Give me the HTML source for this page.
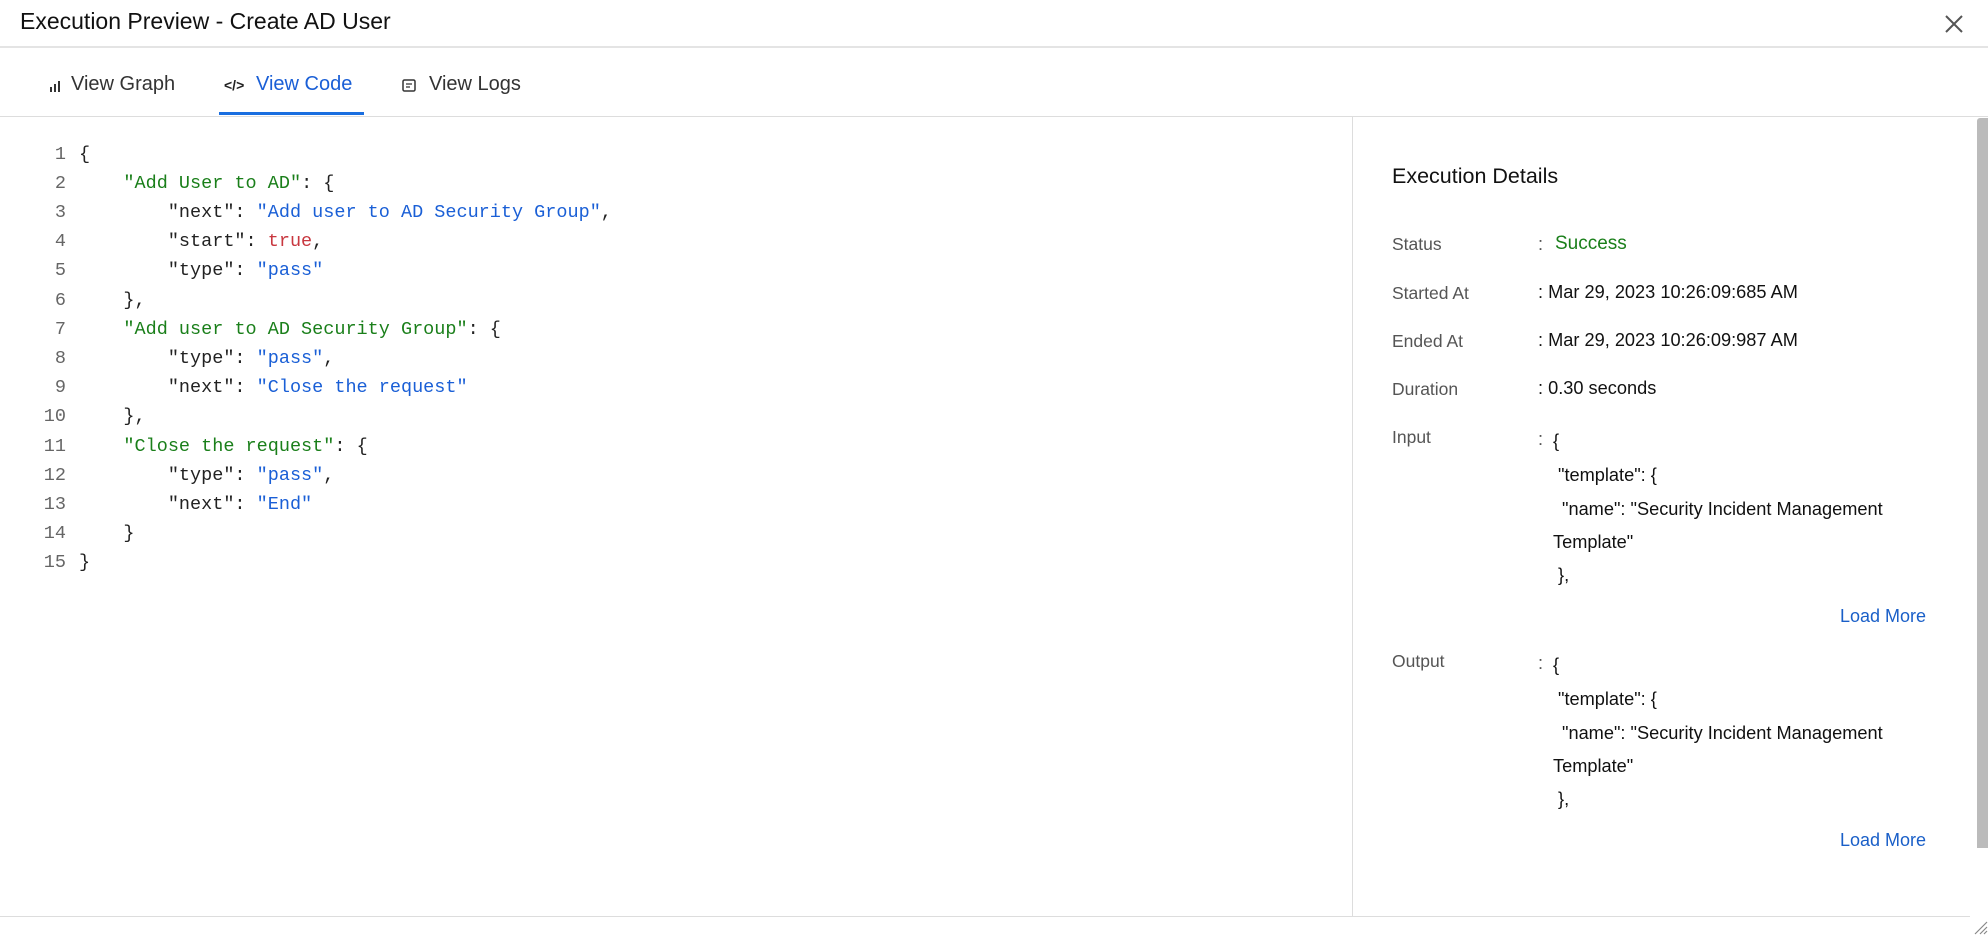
<!DOCTYPE html>
<html><head><meta charset="utf-8"><style>
*{margin:0;padding:0;box-sizing:border-box}
body{width:1988px;height:935px;background:#fff;position:relative;overflow:hidden;font-family:"Liberation Sans",sans-serif;color:#222}
.a{position:absolute;white-space:nowrap}
.code{position:absolute;left:0;top:3px;font-family:"Liberation Mono",monospace;font-size:18.5px;color:#222}
.ln{position:absolute;width:40px;text-align:right;color:#666;left:26px}
.cl{position:absolute;left:79px;white-space:pre}
.g{color:#1a7f1a}.b{color:#1a5fd6}.r{color:#c8373f}
.lbl{color:#555;font-size:17.5px}
.val{font-size:18.2px;color:#111}
.lm{color:#1a5fc8;font-size:18px}
.rp{position:absolute;left:0;top:3px;width:1988px;height:930px}
</style></head><body>
<div class="a" style="left:20px;top:8px;font-size:23px;color:#111">Execution Preview - Create AD User</div>
<svg class="a" style="left:1944px;top:14px" width="20" height="20" viewBox="0 0 20 20"><path d="M2 2L18 18M18 2L2 18" stroke="#555" stroke-width="2"/></svg>
<div class="a" style="left:0;top:46px;width:1988px;height:2px;background:#e4e4e4"></div>

<svg class="a" style="left:49px;top:80px" width="12" height="12" viewBox="0 0 12 12"><rect x="1" y="7" width="2" height="5" fill="#333"/><rect x="5" y="4" width="2" height="8" fill="#333"/><rect x="9" y="1" width="2" height="11" fill="#333"/></svg>
<div class="a" style="left:71px;top:73px;font-size:20px;color:#333">View Graph</div>
<div class="a" style="left:224px;top:77px;font-size:14px;color:#222;font-weight:bold">&lt;/&gt;</div>
<div class="a" style="left:256px;top:73px;font-size:20px;color:#1a5fd6">View Code</div>
<div class="a" style="left:219px;top:112px;width:145px;height:3px;background:#1a6ee0"></div>
<svg class="a" style="left:402px;top:79px" width="14" height="13" viewBox="0 0 14 13"><rect x="1" y="1" width="12" height="11" rx="1.5" fill="none" stroke="#333" stroke-width="1.5"/><path d="M4 5H10M4 8H8" stroke="#333" stroke-width="1.3"/></svg>
<div class="a" style="left:429px;top:73px;font-size:20px;color:#333">View Logs</div>
<div class="a" style="left:0;top:116px;width:1988px;height:1px;background:#ddd"></div>

<div class="code">
<div class="ln" style="top:141px">1</div><div class="cl" style="top:141px">{</div>
<div class="ln" style="top:170px">2</div><div class="cl" style="top:170px">    <span class="g">"Add User to AD"</span>: {</div>
<div class="ln" style="top:199px">3</div><div class="cl" style="top:199px">        "next": <span class="b">"Add user to AD Security Group"</span>,</div>
<div class="ln" style="top:228px">4</div><div class="cl" style="top:228px">        "start": <span class="r">true</span>,</div>
<div class="ln" style="top:257px">5</div><div class="cl" style="top:257px">        "type": <span class="b">"pass"</span></div>
<div class="ln" style="top:287px">6</div><div class="cl" style="top:287px">    },</div>
<div class="ln" style="top:316px">7</div><div class="cl" style="top:316px">    <span class="g">"Add user to AD Security Group"</span>: {</div>
<div class="ln" style="top:345px">8</div><div class="cl" style="top:345px">        "type": <span class="b">"pass"</span>,</div>
<div class="ln" style="top:374px">9</div><div class="cl" style="top:374px">        "next": <span class="b">"Close the request"</span></div>
<div class="ln" style="top:403px">10</div><div class="cl" style="top:403px">    },</div>
<div class="ln" style="top:433px">11</div><div class="cl" style="top:433px">    <span class="g">"Close the request"</span>: {</div>
<div class="ln" style="top:462px">12</div><div class="cl" style="top:462px">        "type": <span class="b">"pass"</span>,</div>
<div class="ln" style="top:491px">13</div><div class="cl" style="top:491px">        "next": <span class="b">"End"</span></div>
<div class="ln" style="top:520px">14</div><div class="cl" style="top:520px">    }</div>
<div class="ln" style="top:549px">15</div><div class="cl" style="top:549px">}</div>
</div>

<div class="a" style="left:1352px;top:117px;width:1px;height:799px;background:#ddd"></div>
<div class="a" style="left:1977px;top:118px;width:11px;height:730px;background:#bbb;border-radius:3px 0 0 0"></div>
<div class="a" style="left:0;top:916px;width:1970px;height:1px;background:#ddd"></div>
<svg class="a" style="left:1970px;top:917px" width="18" height="18" viewBox="0 0 18 18"><path d="M17 5L5 17M17 10L10 17M17 14L14 17" stroke="#888" stroke-width="1.2"/></svg>

<div class="rp">
<div class="a" style="left:1392px;top:161px;font-size:21.5px;color:#111">Execution Details</div>
<div class="a lbl" style="left:1392px;top:231px">Status</div>
<div class="a val" style="left:1538px;top:231px;color:#555">:</div>
<div class="a" style="left:1555px;top:230px;font-size:19px;color:#1a7f1a">Success</div>
<div class="a lbl" style="left:1392px;top:280px">Started At</div>
<div class="a val" style="left:1538px;top:279px">: Mar 29, 2023 10:26:09:685 AM</div>
<div class="a lbl" style="left:1392px;top:328px">Ended At</div>
<div class="a val" style="left:1538px;top:327px">: Mar 29, 2023 10:26:09:987 AM</div>
<div class="a lbl" style="left:1392px;top:376px">Duration</div>
<div class="a val" style="left:1538px;top:375px">: 0.30 seconds</div>
<div class="a lbl" style="left:1392px;top:424px">Input</div>
<div class="a val" style="left:1538px;top:426px;color:#555">:</div>
<div class="a val" style="left:1553px;top:428px">{</div>
<div class="a val" style="left:1558px;top:462px">"template": {</div>
<div class="a val" style="left:1562px;top:496px">"name": "Security Incident Management</div>
<div class="a val" style="left:1553px;top:529px">Template"</div>
<div class="a val" style="left:1558px;top:562px">},</div>
<div class="a lm" style="left:1840px;top:603px">Load More</div>
<div class="a lbl" style="left:1392px;top:648px">Output</div>
<div class="a val" style="left:1538px;top:650px;color:#555">:</div>
<div class="a val" style="left:1553px;top:652px">{</div>
<div class="a val" style="left:1558px;top:686px">"template": {</div>
<div class="a val" style="left:1562px;top:720px">"name": "Security Incident Management</div>
<div class="a val" style="left:1553px;top:753px">Template"</div>
<div class="a val" style="left:1558px;top:786px">},</div>
<div class="a lm" style="left:1840px;top:827px">Load More</div>
</div>
</body></html>
